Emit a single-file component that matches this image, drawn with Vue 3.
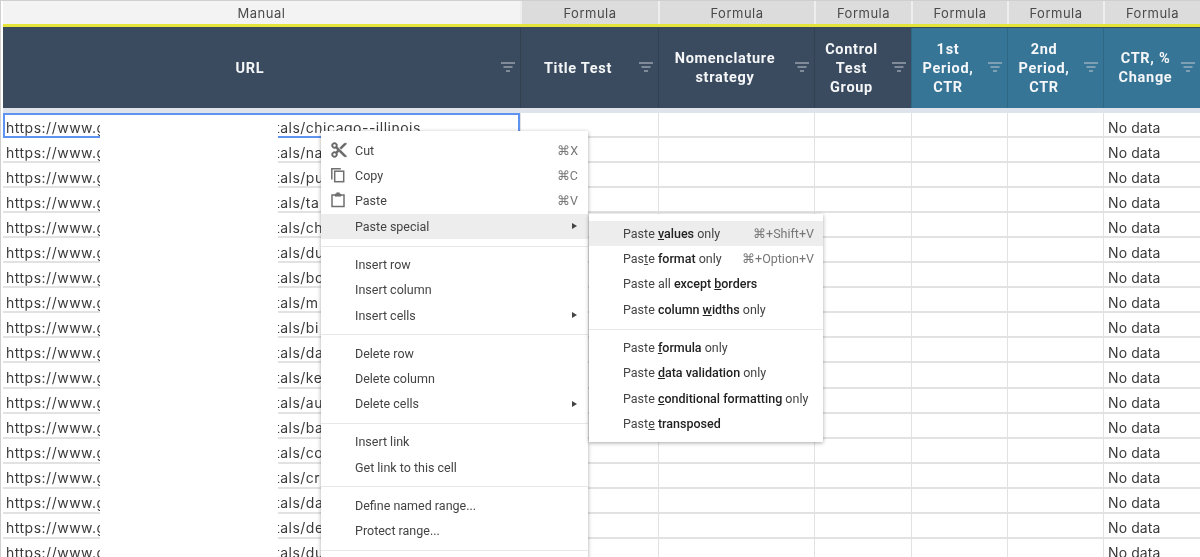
<script setup>
const cols = [
  { top: 'Manual', manual: true, head: ['URL'] },
  { top: 'Formula', head: ['Title Test'] },
  { top: 'Formula', head: ['Nomenclature', 'strategy'] },
  { top: 'Formula', head: ['Control', 'Test', 'Group'] },
  { top: 'Formula', teal: true, head: ['1st', 'Period,', 'CTR'] },
  { top: 'Formula', teal: true, head: ['2nd', 'Period,', 'CTR'] },
  { top: 'Formula', teal: true, last: true, head: ['CTR, %', 'Change'] },
]
const suffixes = ['chicago--illinois', 'na', 'pu', 'ta', 'ch', 'du', 'bo', 'm', 'bi', 'da', 'ke', 'au', 'ba', 'co', 'cr', 'da', 'de', 'du']

const menu = [
  { label: 'Cut', key: '⌘X', icon: 'cut' },
  { label: 'Copy', key: '⌘C', icon: 'copy' },
  { label: 'Paste', key: '⌘V', icon: 'paste' },
  { label: 'Paste special', arrow: true, active: true },
  { sep: true },
  { label: 'Insert row' },
  { label: 'Insert column' },
  { label: 'Insert cells', arrow: true },
  { sep: true },
  { label: 'Delete row' },
  { label: 'Delete column' },
  { label: 'Delete cells', arrow: true },
  { sep: true },
  { label: 'Insert link' },
  { label: 'Get link to this cell' },
  { sep: true },
  { label: 'Define named range...' },
  { label: 'Protect range...' },
  { sep: true },
]

const sub = [
  { active: true, key: '⌘+Shift+V', parts: [['Paste '], ['v', 'bu'], ['alues', 'b'], [' only']] },
  { key: '⌘+Option+V', parts: [['Pas'], ['t', 'u'], ['e '], ['format', 'b'], [' only']] },
  { parts: [['Paste all '], ['except ', 'b'], ['b', 'bu'], ['orders', 'b']] },
  { parts: [['Paste '], ['column ', 'b'], ['w', 'bu'], ['idths', 'b'], [' only']] },
  { sep: true },
  { parts: [['Paste '], ['f', 'bu'], ['ormula', 'b'], [' only']] },
  { parts: [['Paste '], ['d', 'bu'], ['ata validation', 'b'], [' only']] },
  { parts: [['Paste '], ['c', 'bu'], ['onditional formatting', 'b'], [' only']] },
  { parts: [['Past'], ['e', 'u'], [' '], ['transposed', 'b']] },
]
</script>

<template>
  <div class="sheet">
    <div class="grid band">
      <div v-for="(c, i) in cols" :key="i" class="band-cell" :class="{ manual: c.manual }">{{ c.top }}</div>
    </div>
    <div class="yellow"></div>
    <div class="grid head">
      <div v-for="(c, i) in cols" :key="i" class="head-cell" :class="{ teal: c.teal, last: c.last }">
        <div class="head-title">
          <span v-for="l in c.head" :key="l">{{ l }}</span>
        </div>
        <svg class="filter" width="14" height="10" viewBox="0 0 14 10">
          <path d="M0 1h14M2.5 5h9M5 9h4" stroke="#c6ccd4" stroke-width="1.1" fill="none" />
        </svg>
      </div>
    </div>
    <div class="gap"></div>
    <div v-for="(s, r) in suffixes" :key="r" class="grid row">
      <div class="cell url" :class="{ selected: r === 0 }">
        <span class="url-start">https://www.g</span>
        <span class="redact"></span>
        <span class="url-end"><span class="url-inner">tals/{{ s }}</span></span>
      </div>
      <div class="cell"></div>
      <div class="cell"></div>
      <div class="cell"></div>
      <div class="cell"></div>
      <div class="cell"></div>
      <div class="cell nodata">No data</div>
    </div>

    <div class="menu">
      <template v-for="(m, i) in menu" :key="i">
        <div v-if="m.sep" class="sep"></div>
        <div v-else class="item" :class="{ active: m.active }">
          <span class="ico">
            <svg v-if="m.icon === 'cut'" width="18" height="18" viewBox="0 0 24 24" fill="#666" stroke="#666" stroke-width="0.6">
              <path d="M9.64 7.64c.23-.5.36-1.05.36-1.64 0-2.21-1.79-4-4-4S2 3.79 2 6s1.79 4 4 4c.59 0 1.14-.13 1.64-.36L10 12l-2.36 2.36C7.14 14.13 6.59 14 6 14c-2.21 0-4 1.79-4 4s1.79 4 4 4 4-1.79 4-4c0-.59-.13-1.14-.36-1.64L12 14l7 7h3v-1L9.64 7.64zM6 8c-1.1 0-2-.89-2-2s.9-2 2-2 2 .89 2 2-.9 2-2 2zm0 12c-1.1 0-2-.89-2-2s.9-2 2-2 2 .89 2 2-.9 2-2 2zm6-7.5c-.28 0-.5-.22-.5-.5s.22-.5.5-.5.5.22.5.5-.22.5-.5.5zM19 3l-6 6 2 2 7-7V3z" />
            </svg>
            <svg v-else-if="m.icon === 'copy'" class="ico-low" width="16" height="16" viewBox="0 0 16 16" fill="none" stroke="#6f6f6f" stroke-width="1.5">
              <path d="M1.8 12.5V1.8h9" />
              <rect x="4.7" y="4.2" width="9" height="10.5" />
            </svg>
            <svg v-else-if="m.icon === 'paste'" class="ico-low" width="16" height="16" viewBox="0 0 16 16" fill="none" stroke="#6f6f6f" stroke-width="1.5">
              <path d="M5 3H2v11.5h12V3h-3" />
              <path d="M5 4.2V2h1.6V.8h2.8V2H11v2.2z" fill="#6f6f6f" stroke-width="0.6" />
            </svg>
          </span>
          <span class="label">{{ m.label }}</span>
          <span v-if="m.key" class="key">{{ m.key }}</span>
          <span v-if="m.arrow" class="arrow"></span>
        </div>
      </template>
    </div>

    <div class="submenu">
      <template v-for="(m, i) in sub" :key="i">
        <div v-if="m.sep" class="sep"></div>
        <div v-else class="item" :class="{ active: m.active }">
          <span class="label">
            <span
              v-for="(p, j) in m.parts"
              :key="j"
              :class="{ bold: p[1] && p[1].includes('b'), under: p[1] && p[1].includes('u') }"
            >{{ p[0] }}</span>
          </span>
          <span v-if="m.key" class="key">{{ m.key }}</span>
        </div>
      </template>
    </div>
  </div>
</template>

<style scoped>
.sheet {
  position: relative;
  width: 1200px;
  height: 557px;
  overflow: hidden;
  background: #fff;
  padding: 0 0 0 2px;
  box-sizing: border-box;
  border-left: 1px solid #cfcfcf;
  border-top: 1px solid #cfcfcf;
  font-family: Inter, "Liberation Sans", sans-serif;
  filter: blur(0.35px);
}
.grid {
  display: grid;
  grid-template-columns: 517px 138px 156px 97px 96px 96px 97px;
}
.band {
  height: 23px;
}
.band-cell {
  display: flex;
  align-items: center;
  justify-content: center;
  background: #dcdcdc;
  border-left: 2px solid #eeeeee;
  font-size: 13px;
  letter-spacing: 0.5px;
  color: #4a4a4a;
  box-sizing: border-box;
}
.band-cell.manual {
  background: #f3f3f3;
  border-left: 0;
}
.yellow {
  height: 3px;
  background: #e4e43a;
  border-bottom: 1px solid #3a4a5e;
}
.head {
  height: 80px;
}
.head-cell {
  position: relative;
  display: flex;
  align-items: center;
  background: #3b4b5f;
  border-left: 1px solid #32404f;
  box-sizing: border-box;
}
.head-cell:first-child {
  border-left: 0;
}
.head-cell.teal {
  background: #367596;
  border-left: 1px solid #2f6885;
}
.head-title {
  flex: 1;
  display: flex;
  flex-direction: column;
  align-items: center;
  padding-right: 23px;
  font-family: Roboto, sans-serif;
  font-weight: 700;
  font-size: 14.5px;
  line-height: 19px;
  letter-spacing: 0.7px;
  color: #f4f6f8;
}
.head-cell.last .head-title {
  padding-right: 13px;
}
.filter {
  position: absolute;
  right: 5px;
  top: 34px;
}
.gap {
  height: 5px;
  background: #dfe3ec;
}
.row {
  height: 25.05px;
}
.cell {
  display: flex;
  align-items: center;
  border-bottom: 2px solid #e2e2e2;
  border-left: 1px solid #e2e2e2;
  box-sizing: border-box;
  font-size: 14px;
  line-height: 17px;
  padding-top: 5px;
  color: #3a3a3a;
  min-width: 0;
}
.url {
  border-left: 0;
  padding-left: 3px;
  position: relative;
  letter-spacing: 0.5px;
}
.selected {
  border: 2px solid #5f93f0;
  padding-left: 1px;
  padding-top: 3px;
}
.url-start {
  width: 94px;
  overflow: hidden;
  white-space: nowrap;
  flex: none;
}
.redact {
  flex: none;
  align-self: stretch;
  width: 178px;
  margin: -5px 0 -2px;
  background: #fff;
  position: relative;
  z-index: 1;
}
.selected .redact {
  margin-top: -3px;
}
.url-end {
  overflow: hidden;
  white-space: nowrap;
  flex: none;
}
.url-inner {
  display: inline-block;
  margin-left: -3px;
}
.nodata {
  padding-left: 4px;
  letter-spacing: 0.1px;
}
.menu,
.submenu {
  position: absolute;
  background: #fff;
  box-shadow: 0 1px 4px rgba(0, 0, 0, 0.35);
  font-family: Roboto, sans-serif;
  font-size: 12.5px;
  color: #444;
  z-index: 3;
}
.menu {
  left: 320px;
  top: 130px;
  width: 267px;
  padding-top: 6.5px;
  height: 440px;
  box-sizing: border-box;
}
.submenu {
  left: 588px;
  top: 213px;
  width: 234px;
  padding: 6.5px 0 6px;
}
.item {
  display: flex;
  align-items: center;
  height: 25.4px;
  position: relative;
}
.menu .item {
  padding: 0 10px 0 34px;
}
.submenu .item {
  padding: 0 9px 0 34px;
}
.item.active {
  background: #ededed;
}
.ico {
  position: absolute;
  left: 9px;
  top: 3px;
  display: flex;
}
.ico-low {
  margin-top: 1px;
}
.label {
  flex: 1;
  white-space: pre;
}
.key {
  color: #777;
  font-size: 12.5px;
}
.arrow {
  width: 0;
  height: 0;
  border-left: 5px solid #444;
  border-top: 3px solid transparent;
  border-bottom: 3px solid transparent;
  margin-right: 1px;
}
.sep {
  height: 1px;
  background: #e8e8e8;
  margin: 6.5px 0 5.1px;
}
.bold {
  font-weight: 500;
  color: #222;
}
.under {
  text-decoration: underline;
}
</style>
